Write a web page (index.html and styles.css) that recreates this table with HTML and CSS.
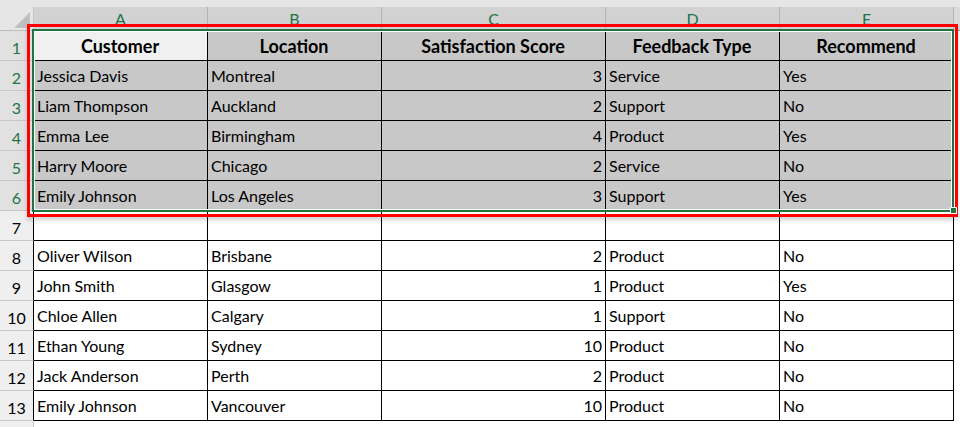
FILE: index.html
```html
<!DOCTYPE html>
<html>
<head>
<meta charset="utf-8">
<link rel="stylesheet" href="styles.css">
</head>
<body>
<div class="sheet">
  <div class="strip"></div>
  <div class="grid">
    <div class="corner"><svg class="tri" width="16" height="16" viewBox="0 0 16 16"><polygon points="16,0 16,16 0,16" fill="#bfbfbf"/></svg></div>
    <div class="ch sel">A</div><div class="ch sel">B</div><div class="ch sel">C</div><div class="ch sel">D</div><div class="ch sel">E</div><div class="ch f"></div>

    <div class="rh on">1</div>
    <div class="c hd active">Customer</div><div class="c hd g">Location</div><div class="c hd g">Satisfaction Score</div><div class="c hd g">Feedback Type</div><div class="c hd g">Recommend</div><div class="x"></div>

    <div class="rh on">2</div>
    <div class="c g">Jessica Davis</div><div class="c g">Montreal</div><div class="c g num">3</div><div class="c g">Service</div><div class="c g">Yes</div><div class="x"></div>

    <div class="rh on">3</div>
    <div class="c g">Liam Thompson</div><div class="c g">Auckland</div><div class="c g num">2</div><div class="c g">Support</div><div class="c g">No</div><div class="x"></div>

    <div class="rh on">4</div>
    <div class="c g">Emma Lee</div><div class="c g">Birmingham</div><div class="c g num">4</div><div class="c g">Product</div><div class="c g">Yes</div><div class="x"></div>

    <div class="rh on">5</div>
    <div class="c g">Harry Moore</div><div class="c g">Chicago</div><div class="c g num">2</div><div class="c g">Service</div><div class="c g">No</div><div class="x"></div>

    <div class="rh on">6</div>
    <div class="c g">Emily Johnson</div><div class="c g">Los Angeles</div><div class="c g num">3</div><div class="c g">Support</div><div class="c g">Yes</div><div class="x"></div>

    <div class="rh">7</div>
    <div class="c"></div><div class="c"></div><div class="c num"></div><div class="c"></div><div class="c"></div><div class="x"></div>

    <div class="rh">8</div>
    <div class="c">Oliver Wilson</div><div class="c">Brisbane</div><div class="c num">2</div><div class="c">Product</div><div class="c">No</div><div class="x"></div>

    <div class="rh">9</div>
    <div class="c">John Smith</div><div class="c">Glasgow</div><div class="c num">1</div><div class="c">Product</div><div class="c">Yes</div><div class="x"></div>

    <div class="rh">10</div>
    <div class="c">Chloe Allen</div><div class="c">Calgary</div><div class="c num">1</div><div class="c">Support</div><div class="c">No</div><div class="x"></div>

    <div class="rh">11</div>
    <div class="c">Ethan Young</div><div class="c">Sydney</div><div class="c num">10</div><div class="c">Product</div><div class="c">No</div><div class="x"></div>

    <div class="rh">12</div>
    <div class="c">Jack Anderson</div><div class="c">Perth</div><div class="c num">2</div><div class="c">Product</div><div class="c">No</div><div class="x"></div>

    <div class="rh">13</div>
    <div class="c">Emily Johnson</div><div class="c">Vancouver</div><div class="c num">10</div><div class="c">Product</div><div class="c">No</div><div class="x"></div>

    <div class="rh last"></div>
    <div class="e"></div><div class="e"></div><div class="e"></div><div class="e"></div><div class="e"></div><div class="e"></div>
  </div>
  <div class="redbox"></div>
  <div class="selbox"></div>
  <div class="handle"></div>
</div>
</body>
</html>
```

FILE: styles.css
```css
html, body {
  margin: 0;
  padding: 0;
  background: #ffffff;
}
.sheet {
  position: relative;
  width: 960px;
  height: 427px;
  overflow: hidden;
  font-family: Lato, "Liberation Sans", sans-serif;
  font-size: 16px;
  color: #000;
}
.strip {
  height: 7px;
  background: #e6e6e6;
}
.grid {
  display: grid;
  grid-template-columns: 34px 174px 174px 224px 174px 174px 1fr;
  grid-template-rows: 24px repeat(13, 30px) 6px;
}
.corner {
  background: #e6e6e6;
  border-right: 1px solid #c6c6c6;
  border-bottom: 1px solid #bdbdbd;
  box-sizing: border-box;
  display: flex;
  justify-content: flex-end;
  align-items: flex-end;
  padding: 0 3px 2px 0;
}
.tri { display: block; }
.ch {
  box-sizing: border-box;
  background: #d2d2d2;
  border-right: 1px solid #b4b4b4;
  border-bottom: 1px solid #9e9e9e;
  color: #217346;
  text-align: center;
  font-size: 16px;
  line-height: 22px;
  padding-top: 1px;
}
.ch.f {
  background: #d9d9d9;
  border-right: none;
}
.rh {
  box-sizing: border-box;
  background: #efefef;
  border-right: 1px solid #000;
  border-bottom: 1px solid #c8c8c8;
  text-align: center;
  font-size: 16px;
  line-height: 30px;
  padding-top: 2px;
  color: #000;
}
.rh.on {
  background: #e1e1e1;
  color: #217346;
}
.rh.last {
  border-right-color: #c6c6c6;
  border-bottom: none;
}
.c {
  box-sizing: border-box;
  border-right: 1px solid #000;
  border-bottom: 1px solid #000;
  padding: 2px 4px 0 3px;
  line-height: 26px;
  white-space: nowrap;
  overflow: hidden;
}
.c.g { background: #c8c8c8; }
.c.active { background: #f0f0f0; }
.c.hd {
  font-weight: bold;
  font-size: 18px;
  text-align: center;
  padding-top: 2px;
}
.c.num { text-align: right; padding-right: 3px; }
.x, .e { background: #fff; }
.redbox {
  position: absolute;
  left: 27px;
  top: 24px;
  width: 931px;
  height: 193px;
  box-sizing: border-box;
  border: 3px solid #ff0000;
  box-shadow: 0 3px 4px rgba(0, 0, 0, 0.18);
}
.selbox {
  position: absolute;
  left: 32px;
  top: 29px;
  width: 922px;
  height: 183px;
  box-sizing: border-box;
  border: 2px solid #217346;
  box-shadow: inset 0 0 0 1px #ffffff;
}
.handle {
  position: absolute;
  left: 950px;
  top: 207px;
  width: 7px;
  height: 7px;
  box-sizing: border-box;
  background: #217346;
  border: 1px solid #ffffff;
}
```
